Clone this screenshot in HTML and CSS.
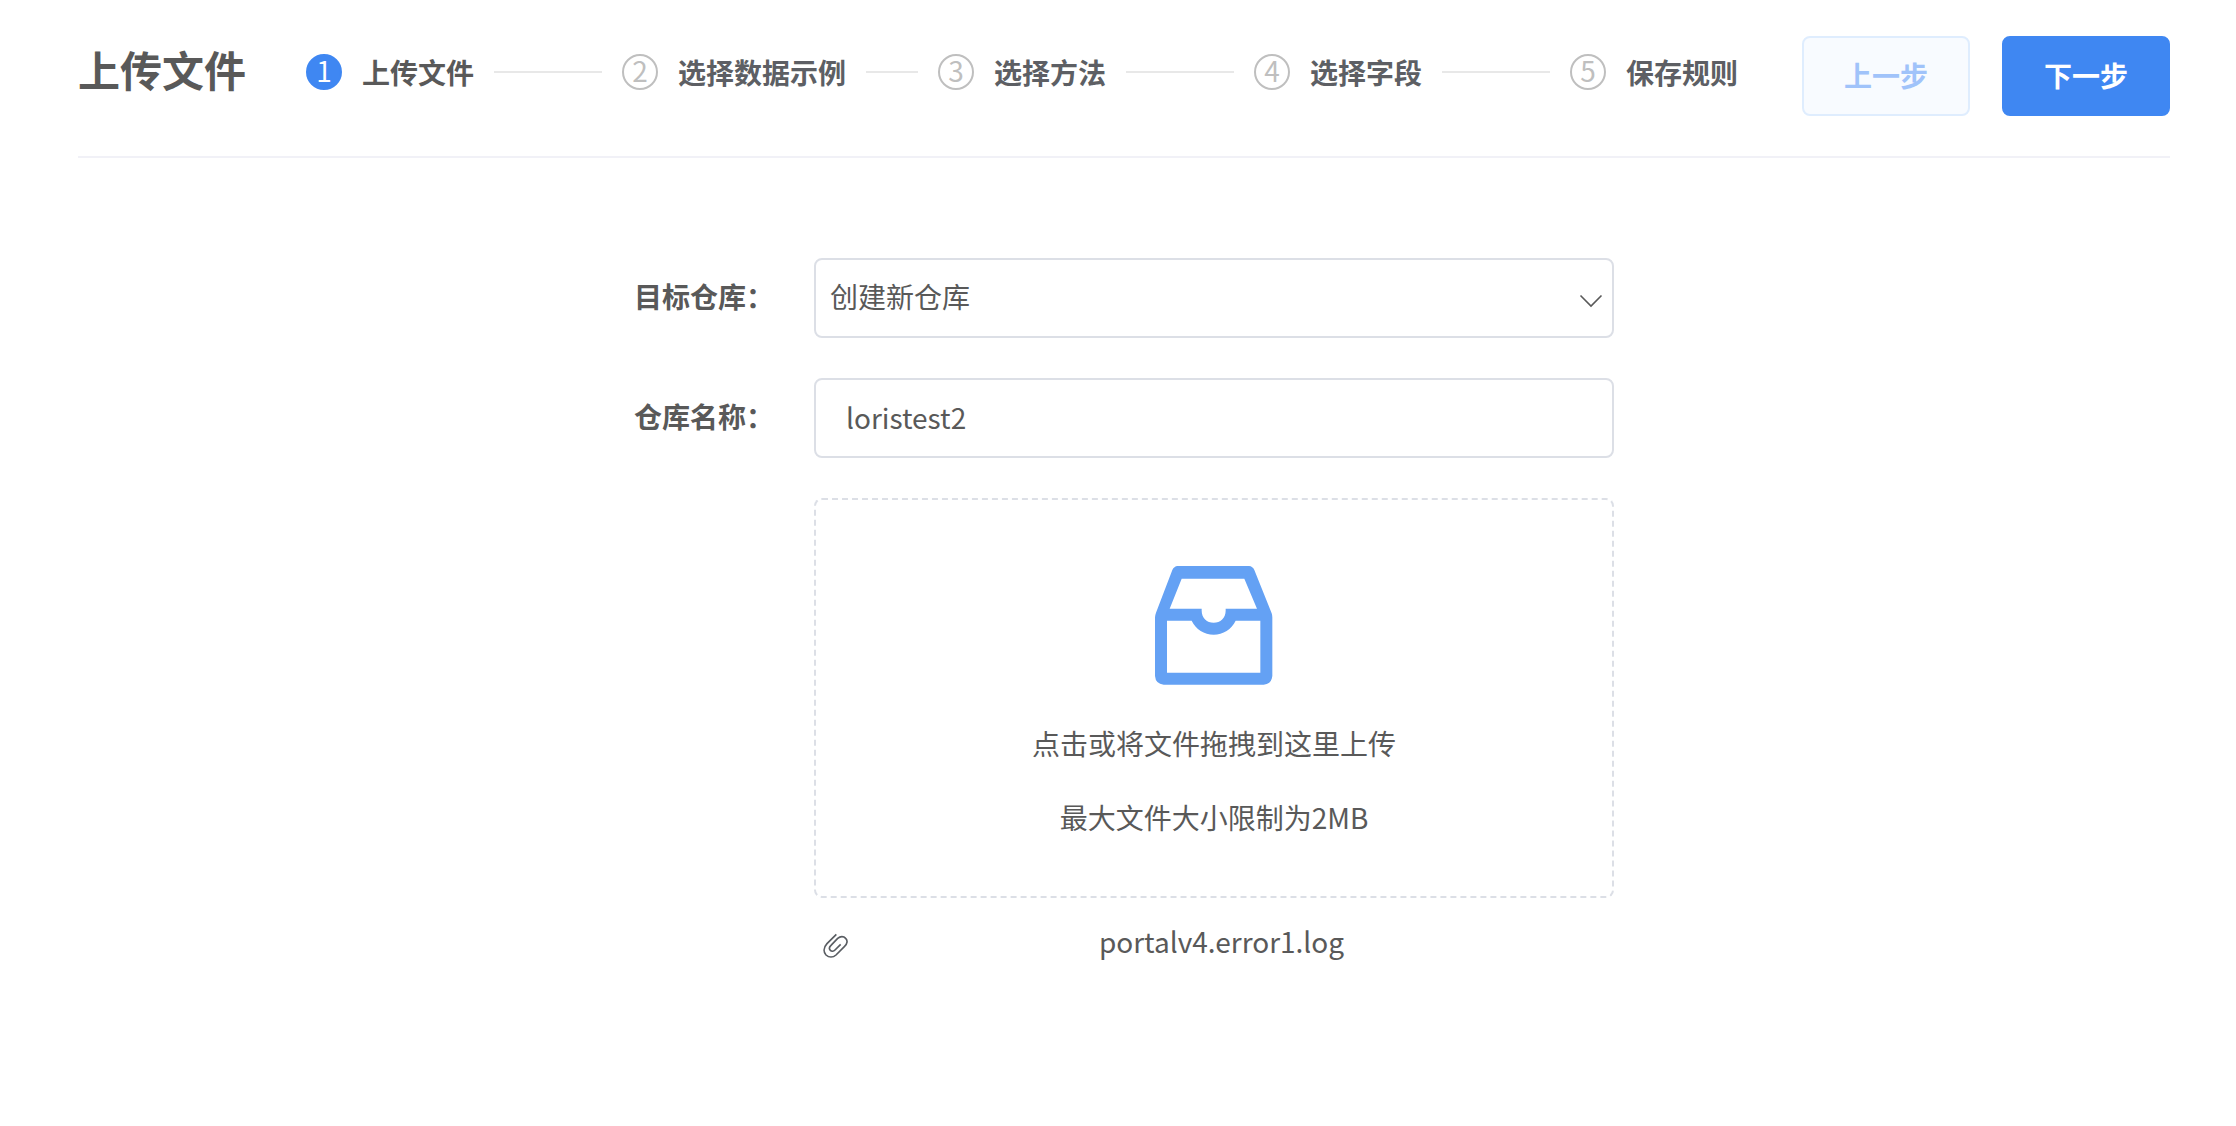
FILE: index.html
```html
<!DOCTYPE html>
<html lang="zh-CN">
<head>
<meta charset="UTF-8">
<title>上传文件</title>
<link rel="stylesheet" href="styles.css">
</head>
<body>
<header class="header">
	<h1 class="title">上传文件</h1>
	<ol class="steps">
		<li class="step active"><span class="num">1</span><span class="name">上传文件</span></li>
		<li class="step"><span class="num">2</span><span class="name">选择数据示例</span></li>
		<li class="step"><span class="num">3</span><span class="name">选择方法</span></li>
		<li class="step"><span class="num">4</span><span class="name">选择字段</span></li>
		<li class="step"><span class="num">5</span><span class="name">保存规则</span></li>
	</ol>
	<div class="buttons">
		<button type="button" class="btn" disabled>上一步</button>
		<button type="button" class="btn primary">下一步</button>
	</div>
</header>

<form class="form">
	<div class="row">
		<label class="label" for="repo">目标仓库：</label>
		<div class="select">
			<select class="control" id="repo">
				<option selected>创建新仓库</option>
			</select>
			<svg class="arrow" width="24" height="14" viewBox="0 0 24 14"><path d="M1.5 1.5 12 12 22.5 1.5" fill="none" stroke="#595959" stroke-width="1.6"/></svg>
		</div>
	</div>
	<div class="row">
		<label class="label" for="name">仓库名称：</label>
		<input class="control text" type="text" id="name" value="loristest2">
	</div>
	<div class="upload">
		<label class="drop" for="file">
			<svg class="inbox" width="118" height="120" viewBox="0 0 354 360">
				<path fill="#64a1f4" fill-rule="evenodd" d="M68 0H282Q293 1 298 12L350 142Q352 148 352 154V330Q350 354 326 356H26Q2 354 0 330V154Q0 148 3 140L52 12Q57 1 68 0Z
					M80 38 44 128H140V134C140 156 156 170 176 170S212 156 212 134V128H306L268 38Z
					M36 164H110C122 190 148 206 176 206S230 190 242 164H316V320H36Z"/>
			</svg>
			<span class="tip">点击或将文件拖拽到这里上传</span>
			<span class="tip">最大文件大小限制为2MB</span>
		</label>
		<input class="file" type="file" id="file">
		<div class="item">
			<svg class="clip" width="28" height="28" viewBox="0 0 84 84"><path d="M40 4 12 32C0 45 2 58 9 66 18 74 30 74 39 66L64 41C74 32 74 22 68 16 62 9 52 9 44 16L24 37C18 43 18 48 22 52 26 56 32 55 36 51L53 34" fill="none" stroke="#595d62" stroke-width="5"/></svg>
			<span class="filename">portalv4.error1.log</span>
		</div>
	</div>
</form>
</body>
</html>
```
FILE: styles.css
```css
* {
	box-sizing: border-box;
}
body {
	margin: 0;
	padding: 36px 66px 0 78px;
	background: #fff;
	color: #595959;
	font-family: "Noto Sans CJK SC", sans-serif;
	font-size: 28px;
	line-height: 42px;
}
.header {
	display: flex;
	align-items: flex-start;
	padding-bottom: 40px;
	border-bottom: 2px solid #f1f1f7;
}
.title {
	margin: 0;
	font-size: 42px;
	font-weight: bold;
	line-height: 66px;
}
.steps {
	display: flex;
	flex: 1;
	margin: 0 64px 0 60px;
	padding: 0;
	list-style: none;
	line-height: 72px;
}
.step {
	display: flex;
	flex: 1;
	align-items: center;
	gap: 20px;
	margin-right: 20px;
	white-space: nowrap;
}
.step::after {
	content: "";
	flex: 1;
	height: 2px;
	background: #e8e8e8;
}
.step:last-child {
	flex: none;
	margin-right: 0;
}
.step:last-child::after {
	display: none;
}
.num {
	width: 36px;
	height: 36px;
	border: 2px solid #bfbfbf;
	border-radius: 50%;
	color: #bfbfbf;
	line-height: 28px;
	text-align: center;
}
.active .num {
	border-color: #3f87f2;
	background: #3f87f2;
	color: #fff;
}
.name {
	font-weight: bold;
	color: #5d5f64;
}
.active .name {
	color: #595959;
}
.buttons {
	display: flex;
	gap: 32px;
}
.btn {
	height: 80px;
	padding: 0 40px 2px;
	border: 2px solid #dfedfe;
	border-radius: 8px;
	background: #f8fbff;
	color: #a0c3fa;
	font: inherit;
	font-weight: bold;
}
.primary {
	border-color: #3f87f2;
	background: #3f87f2;
	color: #fff;
}
.form {
	width: 980px;
	margin: 100px auto 0;
}
.row {
	display: flex;
	align-items: center;
	margin-bottom: 40px;
}
.label {
	width: 180px;
	padding-bottom: 4px;
	font-weight: bold;
}
.select {
	position: relative;
	flex: 1;
}
.control {
	display: block;
	width: 100%;
	height: 80px;
	padding: 0 14px 4px;
	border: 2px solid #dcdfe6;
	border-radius: 8px;
	background: #fff;
	color: #595959;
	font: inherit;
	appearance: none;
}
.text {
	flex: 1;
	padding: 0 30px 2px;
}
.arrow {
	position: absolute;
	top: 36px;
	right: 11px;
	pointer-events: none;
}
.upload {
	margin-left: 180px;
}
.drop {
	display: flex;
	flex-direction: column;
	align-items: center;
	height: 400px;
	padding-top: 66px;
	border: 2px dashed #dcdfe6;
	border-radius: 8px;
}
.inbox {
	margin-bottom: 36px;
}
.tip {
	margin-bottom: 32px;
}
.file {
	display: none;
}
.item {
	display: flex;
	align-items: center;
	padding: 22px 22px 22px 9px;
}
.clip {
	margin-top: 12px;
}
.filename {
	flex: 1;
	text-align: center;
}
```
